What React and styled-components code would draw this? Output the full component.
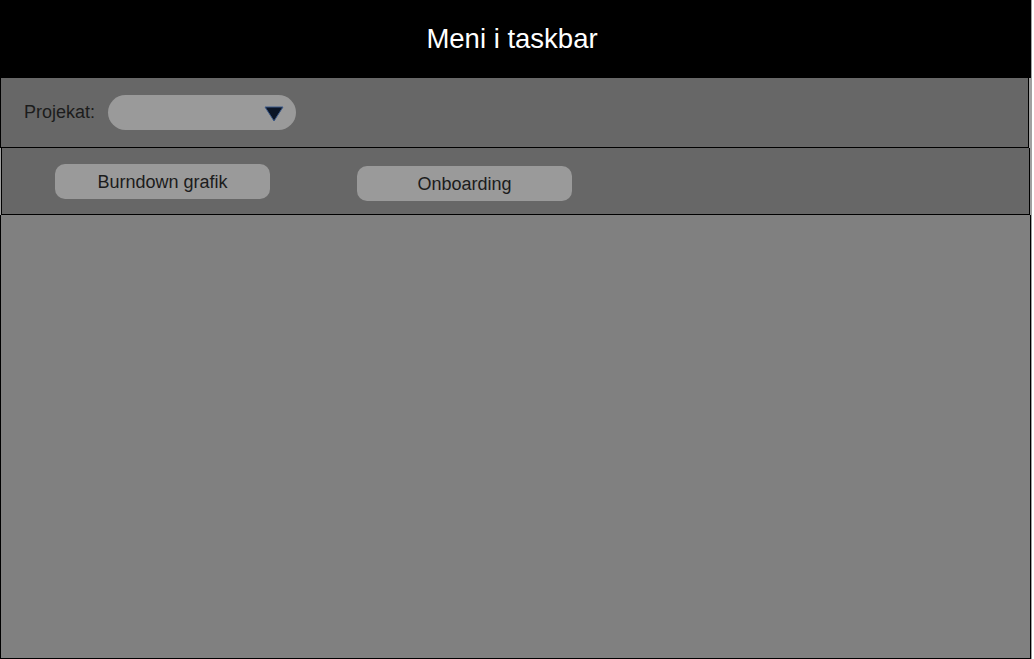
import React from 'react';
import styled, { createGlobalStyle } from 'styled-components';

const GlobalStyle = createGlobalStyle`
  html, body {
    margin: 0;
    padding: 0;
    background: #ffffff;
  }
  body {
    font-family: "Liberation Sans", Arial, sans-serif;
  }
`;

const App = () => {
  return (
    <>
      <GlobalStyle />
      <Page>
        <Header>
          <Title>Meni i taskbar</Title>
        </Header>
        <ProjectBar>
          <Label>Projekat:</Label>
          <Select>
            <Arrow viewBox="0 0 20 16">
              <path d="M1 1 L19 1 L10 15 Z" fill="#0b1526" stroke="#3c5a8a" strokeWidth="1" />
            </Arrow>
          </Select>
        </ProjectBar>
        <TabBar>
          <TabButton $offset={0}>Burndown grafik</TabButton>
          <TabButton $offset={2}>Onboarding</TabButton>
        </TabBar>
        <Content />
      </Page>
    </>
  );
};

export default App;

const Page = styled.div`
  display: flex;
  flex-direction: column;
  width: 1032px;
  height: 659px;
  background: #a0a0a0;
`;

const Header = styled.div`
  display: flex;
  align-items: center;
  justify-content: center;
  width: 1031px;
  height: 78px;
  padding-right: 7px;
  background: #000;
  box-sizing: border-box;
`;

const Title = styled.h1`
  margin: 0;
  color: #fff;
  font-size: 27.5px;
  font-weight: 400;
`;

const ProjectBar = styled.div`
  display: flex;
  align-items: center;
  gap: 13px;
  width: 1029px;
  height: 70px;
  padding-left: 23px;
  background: #676767;
  border: 1px solid #000;
  border-top: none;
  box-sizing: border-box;
`;

const Label = styled.span`
  font-size: 18px;
  color: #1c1c1c;
`;

const Select = styled.div`
  display: flex;
  align-items: center;
  justify-content: flex-end;
  width: 188px;
  height: 35px;
  padding-right: 12px;
  border-radius: 18px;
  background: #9a9a9a;
  box-sizing: border-box;
`;

const Arrow = styled.svg`
  width: 20px;
  height: 16px;
  margin-top: 4px;
`;

const TabBar = styled.div`
  display: flex;
  align-items: flex-start;
  gap: 87px;
  width: 1029px;
  height: 67px;
  margin-left: 1px;
  padding: 16px 0 0 53px;
  background: #676767;
  border: 1px solid #000;
  border-top: none;
  box-sizing: border-box;
`;

const TabButton = styled.div`
  display: flex;
  align-items: center;
  justify-content: center;
  width: 215px;
  height: 35px;
  margin-top: ${(p) => p.$offset}px;
  padding-top: 2px;
  box-sizing: border-box;
  border-radius: 10px;
  background: #9a9a9a;
  color: #1c1c1c;
  font-size: 18px;
`;

const Content = styled.div`
  width: 1031px;
  height: 445px;
  background: #808080;
  border: 1px solid #000;
  border-top: none;
  box-sizing: border-box;
`;
